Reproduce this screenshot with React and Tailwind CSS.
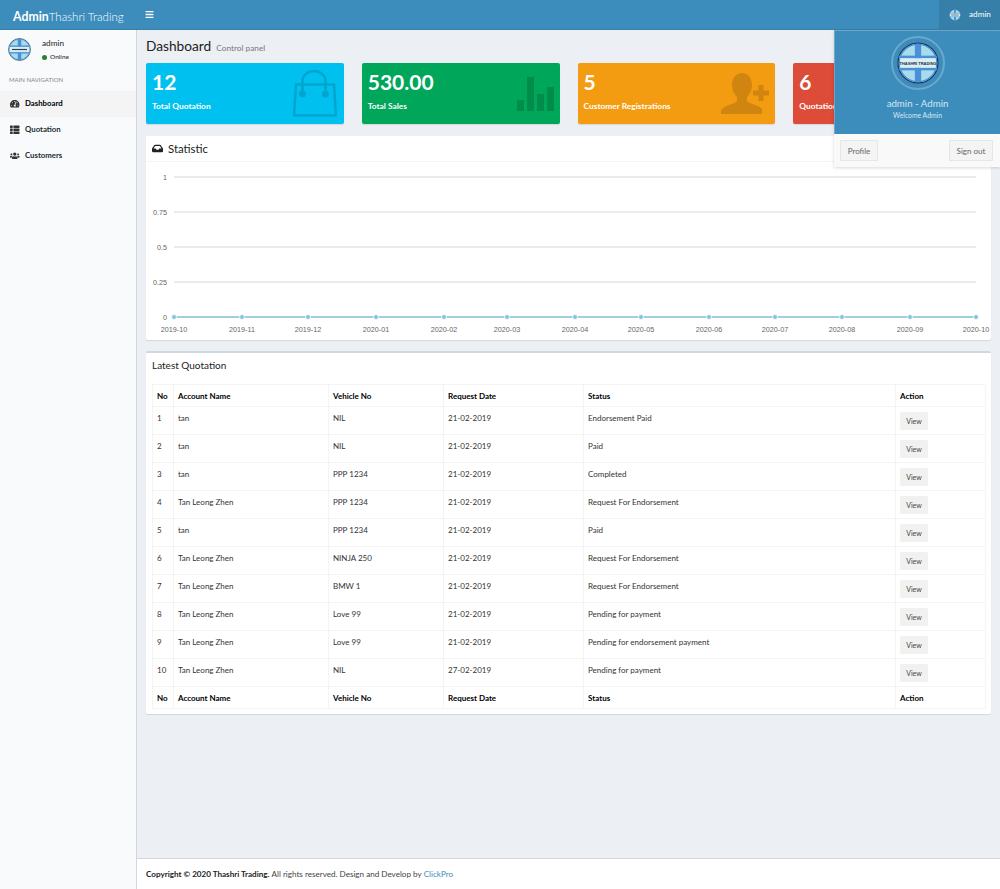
import { FaTachometerAlt, FaThList, FaUsers, FaInbox, FaBars } from "react-icons/fa";

const font = "font-['Lato','Open_Sans',sans-serif]";

const rows = [
  ["1", "tan", "NIL", "21-02-2019", "Endorsement Paid"],
  ["2", "tan", "NIL", "21-02-2019", "Paid"],
  ["3", "tan", "PPP 1234", "21-02-2019", "Completed"],
  ["4", "Tan Leong Zhen", "PPP 1234", "21-02-2019", "Request For Endorsement"],
  ["5", "tan", "PPP 1234", "21-02-2019", "Paid"],
  ["6", "Tan Leong Zhen", "NINJA 250", "21-02-2019", "Request For Endorsement"],
  ["7", "Tan Leong Zhen", "BMW 1", "21-02-2019", "Request For Endorsement"],
  ["8", "Tan Leong Zhen", "Love 99", "21-02-2019", "Pending for payment"],
  ["9", "Tan Leong Zhen", "Love 99", "21-02-2019", "Pending for endorsement payment"],
  ["10", "Tan Leong Zhen", "NIL", "27-02-2019", "Pending for payment"],
];

const months = [
  "2019-10", "2019-11", "2019-12", "2020-01", "2020-02", "2020-03", "2020-04",
  "2020-05", "2020-06", "2020-07", "2020-08", "2020-09", "2020-10",
];
const monthX = [28, 96, 162, 230, 298, 361, 429, 495, 563, 629, 696, 764, 830];

const Logo = ({ size, label }) => (
  <svg width={size} height={size} viewBox="0 0 40 40">
    <circle cx="20" cy="20" r="19" fill="#a9dcea" stroke="#1f3550" strokeWidth="1.200" />
    <circle cx="20" cy="20" r="17.800" fill="none" stroke="#4a90d9" strokeWidth="1.200" />
    <rect x="17" y="2" width="6" height="36" fill="#4a90d9" />
    <rect x="2" y="13" width="36" height="2.500" fill="#4a90d9" />
    <rect x="2" y="24.500" width="36" height="2.500" fill="#4a90d9" />
    <rect x="3" y="15.500" width="34" height="9" fill="#d9eef2" />
    {label ? (
      <text x="20" y="21.500" textAnchor="middle" fontSize="3.800" fontWeight="700" fill="#1f2d3d" fontFamily="Liberation Sans">
        THASHRI TRADING
      </text>
    ) : (
      <rect x="7" y="19" width="26" height="2" fill="#2c3e50" />
    )}
  </svg>
);

const BagIcon = () => (
  <svg width="44" height="47" viewBox="0 0 44 47" fill="none" stroke="#00a5cd" strokeWidth="2.500" className="-translate-x-[1px]">
    <path d="M3 14.500h38l2 31H1z" />
    <path d="M9.500 24V11a11.500 10 0 0 1 23 0v13" />
    <circle cx="9.500" cy="24" r="2.200" fill="#00a5cd" />
    <circle cx="32.500" cy="24" r="2.200" fill="#00a5cd" />
  </svg>
);

const BarsIcon = () => (
  <svg width="37" height="34" viewBox="0 0 37 34" fill="#008d4c">
    <rect x="0" y="23" width="7" height="11" />
    <rect x="10" y="0" width="7" height="34" />
    <rect x="20" y="17" width="7" height="17" />
    <rect x="30" y="10" width="7" height="24" />
  </svg>
);

const PersonAddIcon = () => (
  <svg width="48" height="41" viewBox="0 0 48 41" fill="#cf850f">
    <path d="M21 0c6 0 10 5 10 12 0 5-2 9-5 12v4c2 3 12 4 15 8v5H0v-3c2-6 13-6 16-10v-4c-3-3-5-7-5-12C11 5 15 0 21 0z" />
    <rect x="37.500" y="12" width="5" height="16" />
    <rect x="32" y="17.500" width="16" height="5" />
  </svg>
);

const StatCard = ({ value, label, bg, children }) => (
  <div className={`relative h-[61px] rounded-[2px] overflow-hidden text-white px-[6px] pt-[6px] shadow-[0_1px_1px_rgba(0,0,0,0.1)] ${bg}`}>
    <div className="text-[21px] leading-[25px] font-bold">{value}</div>
    <div className="text-[8.400px] leading-[12px] font-bold mt-[6px] whitespace-nowrap">{label}</div>
    <div className="absolute right-[6px] top-0 h-full flex items-center">{children}</div>
  </div>
);

const NavItem = ({ icon, label, active }) => (
  <div className={`h-[26px] flex items-center pl-[10px] gap-[5px] text-[7.800px] font-bold text-[#222d32] ${active ? "bg-[#f4f4f5] text-black" : ""}`}>
    <span className="w-[10px] flex justify-center text-[9.500px] text-[#333]">{icon}</span>
    {label}
  </div>
);

const Chart = () => (
  <svg width="845" height="178" viewBox="0 0 845 178" className="block">
    {[["1", 15], ["0.75", 50], ["0.5", 85], ["0.25", 120], ["0", 155]].map(([t, y]) => (
      <g key={t}>
        <line x1="28" x2="830" y1={y} y2={y} stroke="#e4e4e4" strokeWidth="1.500" />
        <text x="21" y={y + 3} textAnchor="end" fontSize="7.200" fill="#666" fontFamily="Liberation Sans">{t}</text>
      </g>
    ))}
    <line x1="28" x2="830" y1="155" y2="155" stroke="#85c4dc" strokeWidth="1.500" />
    {monthX.map((x, i) => (
      <g key={months[i]}>
        <circle cx={x} cy="155" r="2.500" fill="#85c4dc" stroke="#fff" strokeWidth="0.800" />
        <text x={x} y="170" textAnchor="middle" fontSize="7.200" fill="#666" fontFamily="Liberation Sans">{months[i]}</text>
      </g>
    ))}
  </svg>
);

const HeadRow = () => (
  <tr className="h-[22px] font-bold text-black">
    <th className="border border-[#f4f4f4] pl-[4px] text-left font-bold">No</th>
    <th className="border border-[#f4f4f4] pl-[4px] text-left font-bold">Account Name</th>
    <th className="border border-[#f4f4f4] pl-[4px] text-left font-bold">Vehicle No</th>
    <th className="border border-[#f4f4f4] pl-[4px] text-left font-bold">Request Date</th>
    <th className="border border-[#f4f4f4] pl-[4px] text-left font-bold">Status</th>
    <th className="border border-[#f4f4f4] pl-[4px] text-left font-bold">Action</th>
  </tr>
);

const App = () => {
  return (
    <div className={`relative h-[889px] w-[1000px] overflow-hidden flex flex-col bg-[#ecf0f5] text-[#333] ${font}`}>
      {/* top bar */}
      <header className="h-[30px] shrink-0 bg-[#3c8dbc] border-b border-[#367fa9] flex items-center text-white">
        <div className="w-[136px] pl-[13px] whitespace-nowrap">
          <span className="font-bold text-[12.300px]">Admin</span>
          <span className="font-light text-[11.500px]">Thashri Trading</span>
        </div>
        <FaBars className="ml-[9px] text-[9px]" />
        <div className="ml-auto h-full w-[61px] bg-[#367fa9] flex items-center pl-[10px] gap-[8px] text-[8.200px]">
          <Logo size={12} />
          admin
        </div>
      </header>

      <div className="flex flex-1 min-h-0">
        {/* sidebar */}
        <aside className="w-[137px] shrink-0 bg-[#f9fafc] border-r border-[#d2d6de]">
          <div className="h-[41px] pl-[8px] pt-[8px] flex gap-[11px]">
            <Logo size={23} />
            <div className="text-[8.200px] font-medium leading-[10px]">
              <div>admin</div>
              <div className="flex items-center gap-[3px] text-[6.500px] mt-[4px]">
                <span className="w-[5px] h-[5px] rounded-full bg-[#2e7d32]" />
                Online
              </div>
            </div>
          </div>
          <div className="text-[6px] text-[#848484] pl-[9px] mt-[4px] h-[16px] leading-[10px]">MAIN NAVIGATION</div>
          <NavItem active icon={<FaTachometerAlt />} label="Dashboard" />
          <NavItem icon={<FaThList />} label="Quotation" />
          <NavItem icon={<FaUsers />} label="Customers" />
        </aside>

        {/* content */}
        <main className="flex-1 min-w-0 flex flex-col">
          <div className="flex-1 pl-[9px] pr-[9px]">
            <div className="flex items-baseline gap-[5px] h-[33px] pt-[6px]">
              <h1 className="text-[13.700px] leading-[20px] font-normal text-[#222]">Dashboard</h1>
              <span className="text-[8.300px] text-[#777]">Control panel</span>
            </div>
            <div className="grid grid-cols-4 gap-[18px]">
              <StatCard value="12" label="Total Quotation" bg="bg-[#00c0ef]"><BagIcon /></StatCard>
              <StatCard value="530.00" label="Total Sales" bg="bg-[#00a65a]"><BarsIcon /></StatCard>
              <StatCard value="5" label="Customer Registrations" bg="bg-[#f39c12]"><PersonAddIcon /></StatCard>
              <StatCard value="6" label="Quotation" bg="bg-[#dd4b39]" />
            </div>

            <section className="mt-[12px] bg-white rounded-[2px] shadow-[0_1px_1px_rgba(0,0,0,0.1)]">
              <div className="h-[26px] flex items-center gap-[5px] pl-[6px] border-b border-[#f4f4f4] text-[11.400px] text-[#222]">
                <FaInbox className="text-[11px]" />
                Statistic
              </div>
              <Chart />
            </section>

            <section className="mt-[11px] h-[363px] bg-white border-t-2 border-[#d2d6de] rounded-[2px] px-[6px] shadow-[0_1px_1px_rgba(0,0,0,0.1)]">
              <h3 className="h-[31px] pt-[4px] text-[10px] leading-[16px] font-normal text-[#222]">Latest Quotation</h3>
              <table className="w-[833px] table-fixed border-collapse text-[8px] text-[#333]">
                <colgroup>
                  <col className="w-[21px]" />
                  <col className="w-[155px]" />
                  <col className="w-[115px]" />
                  <col className="w-[140px]" />
                  <col className="w-[312px]" />
                  <col className="w-[90px]" />
                </colgroup>
                <thead>
                  <HeadRow />
                </thead>
                <tbody>
                  {rows.map((r) => (
                    <tr key={r[0]} className="h-[28px]">
                      {r.map((c, i) => (
                        <td key={i} className="border border-[#f4f4f4] pl-[4px] align-top pt-[5px] leading-[12px] whitespace-nowrap">{c}</td>
                      ))}
                      <td className="border border-[#f4f4f4] pl-[4px] align-top pt-[5px]">
                        <button className="w-[28px] h-[18px] rounded-[2px] bg-[#f1f1f1] text-[7px] text-[#444]">View</button>
                      </td>
                    </tr>
                  ))}
                </tbody>
                <tfoot>
                  <HeadRow />
                </tfoot>
              </table>
            </section>
          </div>

          <footer className="h-[31px] shrink-0 bg-white border-t border-[#d2d6de] flex items-center pl-[9px] text-[8.100px] text-[#444]">
            <strong className="font-bold text-[#222]">Copyright © 2020 Thashri Trading.</strong>
            <span className="ml-[2px]">All rights reserved. Design and Develop by</span>
            <span className="ml-[2px] text-[#3c8dbc]">ClickPro</span>
          </footer>
        </main>
      </div>

      {/* user menu, open over the page */}
      <div className="absolute left-[834px] top-[30px] w-[166px] h-[137px] bg-white shadow-[0_1px_3px_rgba(0,0,0,0.15)]">
        <div className="h-[104px] bg-[#3c8dbc] border-t border-l border-[#6ba8cc] flex flex-col items-center pt-[5px] text-[#d5e8f2]">
          <div className="w-[54px] h-[54px] rounded-full border-[2px] border-[#6ba8cc] flex items-center justify-center">
            <Logo size={42} label />
          </div>
          <div className="text-[9.700px] leading-[14px] mt-[6px]">admin - Admin</div>
          <div className="text-[6.800px] leading-[10px] mt-0">Welcome Admin</div>
        </div>
        <div className="flex justify-between bg-[#f9f9f9] h-[33px] pl-[6px] pr-[7px] pt-[6px]">
          <button className="h-[21px] w-[38px] bg-[#f4f4f4] border border-[#e6e6e6] text-[8px] text-[#666]">Profile</button>
          <button className="h-[21px] w-[44px] bg-[#f4f4f4] border border-[#e6e6e6] text-[8px] text-[#666]">Sign out</button>
        </div>
      </div>
    </div>
  );
};

export default App;
